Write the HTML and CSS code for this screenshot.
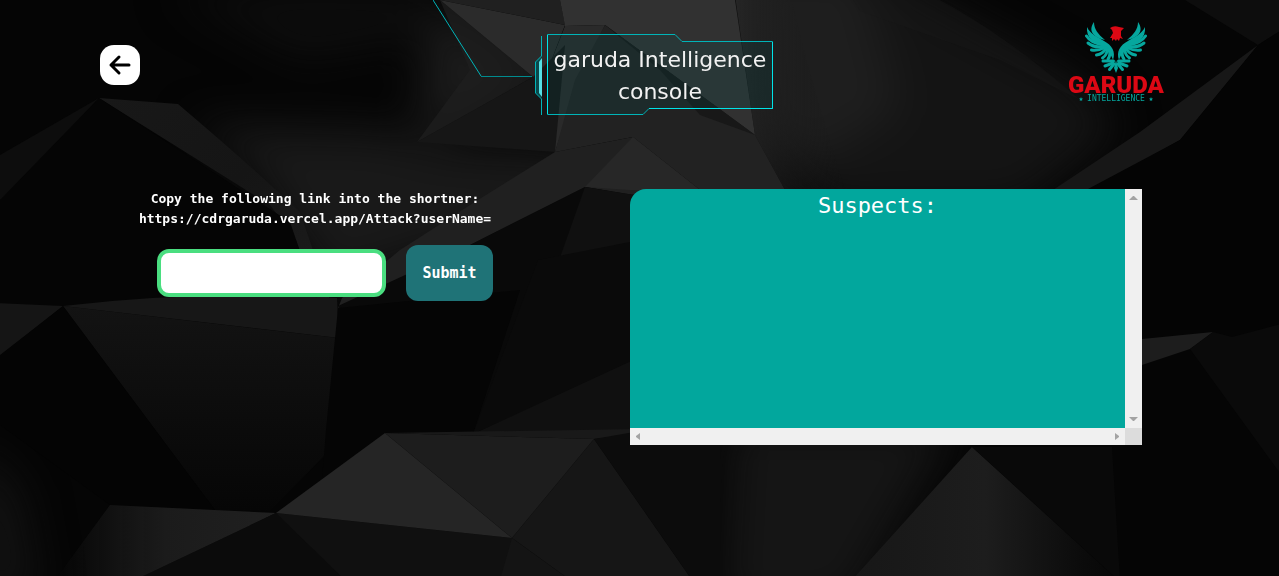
FILE: index.html
```html
<!DOCTYPE html>
<html lang="en">
<head>
<meta charset="utf-8">
<meta name="viewport" content="width=device-width, initial-scale=1">
<title>Garuda Intelligence Console</title>
<link rel="stylesheet" href="styles.css">
</head>
<body>
<svg class="backdrop" viewBox="0 0 1279 576" preserveAspectRatio="xMidYMid slice" aria-hidden="true">
  <defs>
    <linearGradient id="fadeR"><stop offset="0" stop-color="#262626"/><stop offset="1" stop-color="#181818" stop-opacity="0"/></linearGradient>
    <linearGradient id="fadeL"><stop offset="0" stop-color="#202020" stop-opacity="0"/><stop offset="0.5" stop-color="#1b1b1b"/><stop offset="1" stop-color="#202020"/></linearGradient>
    <linearGradient id="ridge" x1="0" y1="0" x2="1" y2="1"><stop offset="0" stop-color="#181818"/><stop offset="0.5" stop-color="#151515"/><stop offset="1" stop-color="#1c1c1c"/></linearGradient>
    <linearGradient id="down" x1="0" y1="0" x2="0" y2="1"><stop offset="0" stop-color="#131313"/><stop offset="1" stop-color="#060606"/></linearGradient>
    <linearGradient id="cone"><stop offset="0" stop-color="#171717"/><stop offset="0.5" stop-color="#1d1d1d"/><stop offset="0.85" stop-color="#0c0c0c"/><stop offset="1" stop-color="#070707"/></linearGradient>
    <filter id="soft" x="-10%" y="-10%" width="120%" height="120%" color-interpolation-filters="sRGB"><feGaussianBlur stdDeviation="22"/></filter>
    <filter id="edge" color-interpolation-filters="sRGB"><feGaussianBlur stdDeviation="0.7"/></filter>
  </defs>
  <rect width="1279" height="576" fill="#050505"/>
  <g filter="url(#soft)">
    <path d="M170 -10H430L420 40 300 60Z" fill="#0d0d0d"/>
    <path d="M190 125 390 130 420 145 560 150 620 190 470 245 330 290 250 170Z" fill="#191919"/>
    <path d="M430 0 540 77 417 142 425 70Z" fill="#1c1c1c"/>
    <path d="M760 -40H860L1080 80 1120 130 1020 210H830L780 150Z" fill="#141414"/>
    <path d="M735 -40H860L900 110 800 170 750 130Z" fill="#1e1e1e"/>
    <path d="M730 420H960L850 610H720Z" fill="#151515"/>
    <path d="M-30 440 20 490 40 600H-30Z" fill="#121212"/>
  </g>
  <g filter="url(#edge)">
    <path d="M99 98 0 155V200L10 195Z" fill="#0d0d0d"/>
    <path d="M99 98 178 104Q250 165 300 212L330 300 318 300 296 240 270 205Z" fill="url(#ridge)"/>
    <path d="M99 98 290 222 320 310H0V200Z" fill="#050505"/>
    <path d="M440 0 565 25 545 77 533 77Z" fill="#2b2b2b"/>
    <path d="M440 0 533 77 417 142 470 70Z" fill="#202020" opacity=".7"/>
    <path d="M440 0H560L565 25Z" fill="#202020"/>
    <path d="M560 0H735L755 135 605 25 565 26Z" fill="#313131"/>
    <path d="M565 26 605 25 575 90 555 152 545 77Z" fill="#2a2a2a"/>
    <path d="M533 77 565 45 555 152 417 142Z" fill="#161616"/>
    <path d="M605 25 755 135 785 190H700L633 137 555 152 575 80Z" fill="#222"/>
    <path d="M605 25 755 135 700 115 660 70Z" fill="#181818"/>
    <path d="M735 -5H790Q810 80 845 190H785L755 135Z" fill="url(#fadeR)"/>
    <path d="M633 137 555 152 470 205 400 250 342 298 338 308 470 245 585 187 630 195 700 190Z" fill="#202020"/>
    <path d="M633 137 700 190H630L585 187Z" fill="#272727"/>
    <path d="M585 187 640 196V360L473 434 440 380 338 306 470 245Z" fill="#090909"/>
    <path d="M585 187 640 196V270L545 300Z" fill="#101010"/>
    <path d="M850 -5H930Q1000 30 1080 100L1000 60 860 11Z" fill="#1a1a1a" opacity=".4"/>
    <path d="M1185 0H1285V28L1258 45Z" fill="#0d0d0d"/>
    <path d="M1258 45 1180 140 1088 192H1050L1140 132Z" fill="#171717"/>
    <path d="M1258 45 1285 28V330L1142 330V189H1088L1180 140Z" fill="#040404"/>
    <path d="M-5 303 63 306 -5 360Z" fill="#151515"/>
    <path d="M63 306Q200 290 337 298L339 338Z" fill="#171717"/>
    <path d="M63 306 338 338 325 455 270 511 215 510Z" fill="url(#down)"/>
    <path d="M63 306 215 510 110 505 0 425V355Z" fill="#040404"/>
    <path d="M338 308 520 290 473 434H385L322 480 326 430Z" fill="#050505"/>
    <path d="M473 434 538 260 640 240V360Z" fill="#0a0a0a"/>
    <path d="M473 434 640 357V434Z" fill="#101010"/>
    <path d="M110 505 276 513 143 580H55Z" fill="url(#fadeL)"/>
    <path d="M276 513 512 538 560 580H135Z" fill="#101010"/>
    <path d="M276 513 345 580H135Z" fill="#0b0b0b"/>
    <path d="M385 433 512 538 276 513Z" fill="#252525"/>
    <path d="M385 433 594 439 512 538Z" fill="#1d1d1d"/>
    <path d="M385 433 640 429V434L594 439Z" fill="#191919"/>
    <path d="M512 538 594 439 692 580H570Z" fill="#161616"/>
    <path d="M594 439 640 431H720V580H692Z" fill="#0c0c0c"/>
    <path d="M512 538 570 580H500Z" fill="#141414"/>
    <path d="M972 447 1118 580H852Z" fill="url(#cone)"/>
    <path d="M972 447H1112L1120 580H1118Z" fill="#090909"/>
    <path d="M1142 339 1213 332 1190 349 1142 365Z" fill="#1d1d1d"/>
    <path d="M1190 349 1213 332 1232 337 1285 323V480Z" fill="#0a0a0a"/>
  </g>
</svg>

<header class="header">
  <button class="back" type="button" aria-label="Back">
    <svg width="24" height="24" viewBox="0 0 24 24" aria-hidden="true"><path d="M21 12H3M11 4 3 12l8 8" fill="none" stroke="#000" stroke-width="3" stroke-linecap="round" stroke-linejoin="round"/></svg>
  </button>
  <div class="banner">
    <svg class="hud" width="340" height="116" viewBox="0 0 340 116" fill="none" aria-hidden="true">
      <path d="M0 0 48 76" stroke="#00b4b8"/>
      <path d="M48 76.500H99" stroke="#008b8e"/>
      <path d="M114.500 34.500H242L249 41.500H339.500V108.500H216L210 114.500H114.500Z" fill="#0c5050" fill-opacity=".2" stroke="#00b4b8"/>
      <path d="M114.500 35V114M339.500 42V108.500H216" stroke="#00e4e8"/>
      <path d="M108.500 56 102.500 62V93L108.500 99Z" fill="#0a4a4c"/>
      <path d="M108.500 36V56L102.500 62V93L108.500 99V115" stroke="#00b4b8"/>
      <path d="M109 58 106 62V93L109 97Z" fill="#55e0e6"/>
    </svg>
    <h1 class="title">garuda Intelligence console</h1>
  </div>
  <div class="logo">
    <svg width="62" height="52" viewBox="0 0 62 52" aria-hidden="true">
      <defs>
        <g id="wing" fill="#06a79e" stroke="#06a79e" stroke-linecap="round">
          <path stroke="none" d="M9 0C9 7 13 12 20 18 10 16 2 10 9 0Z"/>
          <path stroke="none" d="M2 5C5 12 13 15 19 19 27 23 31 30 28 38 27 35 25 32 24 29L17 24C9 21 1 16 2 5Z"/>
          <g fill="none" stroke-width="3">
            <path d="M1.500 14Q6 21 17 22.500"/>
            <path d="M3 21Q9 26 18 24.500"/>
            <path d="M6.500 28Q13 29 20 25.500"/>
            <path d="M11.500 33Q18 32 21 26"/>
            <path d="M17.500 36Q22 33 22.500 27"/>
            <path d="M23 37Q26 33 24 28"/>
            <path d="M28.500 39 18 39"/>
            <path d="M28 41 20 44"/>
            <path d="M29 42 24.500 47.500"/>
          </g>
        </g>
      </defs>
      <use href="#wing"/>
      <use href="#wing" transform="matrix(-1 0 0 1 62 0)"/>
      <path d="M31 38 29 46 31 51 33 46Z" fill="#06a79e"/>
      <path d="M25 6Q29 3 34 5L39 6 36 9 36 14 38 17 35 16 34 19 32 17 31 19 29 17 27 19 27 16 25 16 28 11 27 8Z" fill="#dc0814"/>
    </svg>
    <strong class="logo-name">GARUDA</strong>
    <span class="logo-tag">
      <svg width="4" height="4" viewBox="0 0 10 10" aria-hidden="true"><path d="M5 0 6.500 3.500 10 4 7.500 6.500 8 10 5 8 2 10 2.500 6.500 0 4 3.500 3.500Z" fill="#06a79e"/></svg>
      INTELLIGENCE
      <svg width="4" height="4" viewBox="0 0 10 10" aria-hidden="true"><path d="M5 0 6.500 3.500 10 4 7.500 6.500 8 10 5 8 2 10 2.500 6.500 0 4 3.500 3.500Z" fill="#06a79e"/></svg>
    </span>
  </div>
</header>

<main class="main">
  <form class="link-form">
    <label class="link-text" for="user-name">Copy the following link into the shortner:<br>https://cdrgaruda.vercel.app/Attack?userName=</label>
    <div class="fields">
      <input class="field" id="user-name" type="text">
      <button class="submit" type="submit">Submit</button>
    </div>
  </form>
  <section class="suspects">
    <div class="suspects-body"><h2 class="suspects-title">Suspects:</h2></div>
    <div class="bar bar-v" aria-hidden="true">
      <svg width="9" height="4" viewBox="0 0 9 4"><path d="M4 0H5L9 4H0Z" fill="#a3a3a3"/></svg>
      <svg width="9" height="4" viewBox="0 0 9 4"><path d="M0 0H9L5 4H4Z" fill="#a3a3a3"/></svg>
    </div>
    <div class="bar bar-h" aria-hidden="true">
      <svg width="4" height="7" viewBox="0 0 4 7"><path d="M4 0V7L0 4V3Z" fill="#a3a3a3"/></svg>
      <svg width="4" height="7" viewBox="0 0 4 7"><path d="M0 0V7L4 4V3Z" fill="#a3a3a3"/></svg>
    </div>
    <div class="bar-corner"></div>
  </section>
</main>
</body>
</html>
```
FILE: styles.css
```css
* {
  box-sizing: border-box;
}

body {
  margin: 0;
  min-height: 100vh;
  background: #050505;
  color: #fff;
  font-family: "DejaVu Sans Mono", monospace;
}

.backdrop {
  position: fixed;
  inset: 0;
  z-index: -1;
  width: 100%;
  height: 100%;
}

.header {
  display: grid;
  grid-template-columns: 8fr 226px 7fr;
  align-items: start;
  padding: 22px 115px 0 100px;
}

.back {
  display: flex;
  align-items: center;
  justify-content: center;
  width: 40px;
  height: 40px;
  margin-top: 23px;
  padding: 0;
  border: 0;
  border-radius: 14px;
  background: #fff;
}

.banner {
  position: relative;
  margin-top: 12px;
  padding: 10px 0 8px;
}

.hud {
  position: absolute;
  top: -34px;
  right: 0;
}

.title {
  position: relative;
  margin: 0;
  color: #f2f2f2;
  font: 400 22px/32px "DejaVu Sans", sans-serif;
  text-align: center;
}

.logo {
  display: flex;
  flex-direction: column;
  align-items: center;
  justify-self: end;
  width: 96px;
}

.logo-name {
  color: #dc0814;
  font: 900 24px/22px Roboto, sans-serif;
}

.logo-tag {
  display: flex;
  align-items: center;
  gap: 4px;
  color: #06a79e;
  font: 8px/6px "DejaVu Sans Mono", monospace;
}

.main {
  display: grid;
  grid-template-columns: 630fr 512fr;
  align-items: start;
  margin-top: 73px;
  padding-right: 137px;
}

.link-form {
  display: flex;
  flex-direction: column;
  align-items: center;
  gap: 16px;
}

.link-text {
  font-size: 13px;
  font-weight: 700;
  line-height: 20px;
  text-align: center;
}

.fields {
  display: flex;
  align-items: center;
  gap: 20px;
  padding-left: 20px;
}

.field {
  width: 229px;
  height: 48px;
  padding: 8px;
  border: 4px solid #4ade80;
  border-radius: 12px;
  background: #fff;
  font: inherit;
}

.submit {
  padding: 16px;
  border: 0;
  border-radius: 12px;
  background: #1f7377;
  color: #fff;
  font: 700 15px/24px "DejaVu Sans Mono", monospace;
}

.suspects {
  display: grid;
  grid-template-columns: 1fr 17px;
  grid-template-rows: 1fr 17px;
  min-height: 256px;
  overflow: hidden;
  border-top-left-radius: 16px;
}

.suspects-body {
  background: #02a79d;
}

.suspects-title {
  margin: 0;
  font-size: 22px;
  font-weight: 400;
  line-height: 34px;
  text-align: center;
}

.bar {
  display: flex;
  align-items: center;
  justify-content: space-between;
  background: #f0f0f0;
}

.bar-v {
  flex-direction: column;
  padding: 7px 0;
}

.bar-h {
  padding: 0 6px;
}

.bar-corner {
  background: #dcdcdc;
}
```
